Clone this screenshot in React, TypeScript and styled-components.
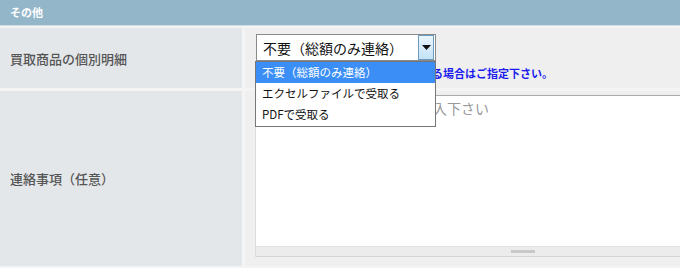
import React, { useState } from 'react';
import styled, { createGlobalStyle } from 'styled-components';

const options = ['不要（総額のみ連絡）', 'エクセルファイルで受取る', 'PDFで受取る'];

const App: React.FC = () => {
  const [selected] = useState<number>(0);
  const [open] = useState<boolean>(true);

  return (
    <>
      <GlobalStyle />
      <Wrapper>
        {/* section header */}
        <Header>その他</Header>

        <Table>
          {/* 個別明細 */}
          <Label $height={60}>買取商品の個別明細</Label>
          <Cell>
            <SelectWrap>
              <SelectBox>
                <span>{options[selected]}</span>
                <ArrowBtn>
                  <svg width="9" height="5" viewBox="0 0 9 5">
                    <path d="M0 0h9L4.5 5z" fill="#111" />
                  </svg>
                </ArrowBtn>
              </SelectBox>
              {open && (
                <OptionList>
                  {options.map((o, i) => (
                    <OptionItem key={o} $active={i === selected}>
                      {o}
                    </OptionItem>
                  ))}
                </OptionList>
              )}
            </SelectWrap>
            <Note>買取商品の明細データをご希望される場合はご指定下さい。</Note>
          </Cell>

          {/* 連絡事項 */}
          <Label $height={175}>連絡事項（任意）</Label>
          <Cell $pad="4px 0 0 10px">
            <TextBox>
              <Placeholder>連絡事項がありましたら記入下さい</Placeholder>
              <ScrollBar>
                <Grip />
              </ScrollBar>
            </TextBox>
          </Cell>
        </Table>
      </Wrapper>
    </>
  );
};

export default App;

/*** style ***/
const GlobalStyle = createGlobalStyle`
  body {
    margin: 0;
    background: #f3f3f3;
    font-family: "Noto Sans CJK JP", "Liberation Sans", sans-serif;
  }
`;

const Wrapper = styled.div`
  width: 680px;
  height: 268px;
  overflow: hidden;
  background: #f4f4f4;
`;

const Header = styled.div`
  height: 25px;
  background: #93b6c9;
  color: #fff;
  font-size: 11px;
  font-weight: bold;
  line-height: 25px;
  padding-left: 10px;
  border-bottom: 1px solid #cfdde5;
`;

const Table = styled.div`
  display: grid;
  grid-template-columns: 242px 1fr;
  column-gap: 3px;
  row-gap: 3px;
  padding-top: 2px;
`;

const Label = styled.div<{ $height: number }>`
  height: ${p => p.$height}px;
  background: #e4e7ea;
  color: #555;
  font-size: 13px;
  font-weight: 500;
  display: flex;
  align-items: center;
  padding-left: 10px;
`;

const Cell = styled.div<{ $pad?: string }>`
  position: relative;
  min-width: 0;
  background: #efefef;
  padding: ${p => p.$pad || '6px 0 0 11px'};
`;

const SelectWrap = styled.div`
  position: relative;
  width: 180px;
  z-index: 5;
`;

const SelectBox = styled.div`
  height: 25px;
  border: 1px solid #8a8a8a;
  background: #fff;
  display: flex;
  align-items: center;
  justify-content: space-between;
  padding-left: 6px;
  font-size: 14px;
  color: #111;

  span {
    white-space: nowrap;
  }
`;

const ArrowBtn = styled.div`
  width: 14px;
  height: 23px;
  margin-right: 1px;
  border: 1px solid #6d9bbd;
  background: linear-gradient(#eaf5fd, #c4e2f7);
  display: flex;
  align-items: center;
  justify-content: center;
`;

const OptionList = styled.ul`
  position: absolute;
  top: 27px;
  left: -1px;
  width: 179px;
  margin: 0;
  padding: 0 0 1px;
  list-style: none;
  background: #fff;
  border: 1px solid #777;
`;

const OptionItem = styled.li<{ $active: boolean }>`
  height: 21px;
  line-height: 21px;
  padding-left: 6px;
  font-size: 11.5px;
  white-space: nowrap;
  color: ${p => (p.$active ? '#fff' : '#111')};
  background: ${p => (p.$active ? '#3a8ef6' : '#fff')};
`;

const Note = styled.div`
  margin-top: 4px;
  font-size: 11px;
  font-weight: bold;
  color: #1c1cee;
  white-space: nowrap;
`;

const TextBox = styled.div`
  height: 161px;
  background: #fff;
  border-top: 1px solid #aaa;
  border-left: 1px solid #ddd;
  display: flex;
  flex-direction: column;
  justify-content: space-between;
`;

const Placeholder = styled.div`
  padding: 2px 0 0 9px;
  font-size: 14px;
  color: #999;
  white-space: nowrap;
`;

const ScrollBar = styled.div`
  height: 9px;
  background: #ececec;
  border-top: 1px solid #e0e0e0;
  border-bottom: 1px solid #d4d4d4;
  display: flex;
  align-items: center;
  padding-left: 255px;
`;

const Grip = styled.div`
  width: 24px;
  height: 3px;
  background: #c8c8c8;
`;
